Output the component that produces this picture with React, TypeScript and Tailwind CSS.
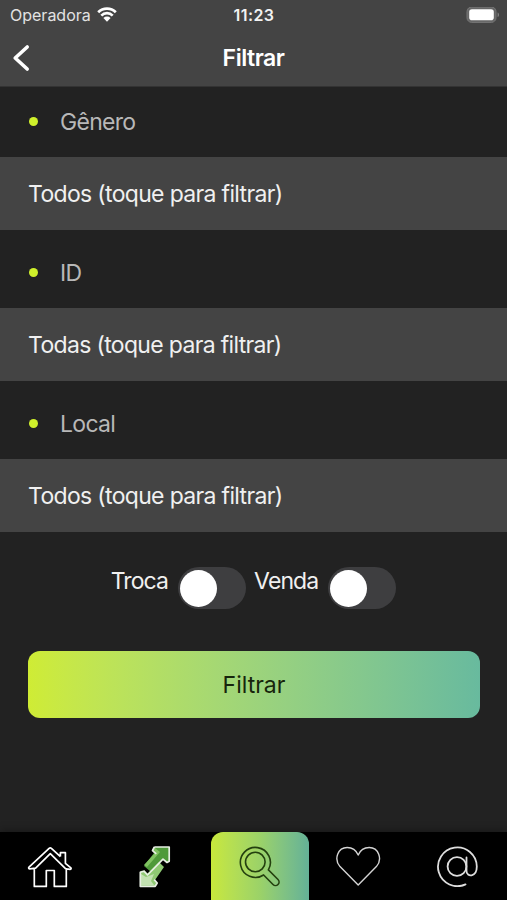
import React, { FC, ReactNode, useState } from 'react'

const filters = [
  { label: 'Gênero', value: 'Todos (toque para filtrar)', height: 'h-[70px] pb-px' },
  { label: 'ID', value: 'Todas (toque para filtrar)', height: 'h-[78px] pt-[7px]' },
  { label: 'Local', value: 'Todos (toque para filtrar)', height: 'h-[78px] pt-[7px]' }
]

const StatusBar: FC = () => (
  <div className="flex h-[30px] items-center justify-between pr-[7px] pl-[10px]">
    <div className="flex w-[200px] items-center gap-[6px]">
      <span className="text-[16px] leading-5 text-[#e2e2e2]">Operadora</span>
      <svg width="20" height="16" viewBox="0 0 20 16" fill="none">
        <path
          d="M1.2 5.2a12.4 12.4 0 0 1 17.6 0M4.3 8.6a8 8 0 0 1 11.4 0"
          stroke="#fff"
          strokeWidth="2.7"
        />
        <path d="M6.4 11a5.2 5.2 0 0 1 7.2 0L10 14.7z" fill="#fff" />
      </svg>
    </div>
    <span className="mr-[2px] text-[16px] leading-5 font-semibold tracking-[0.4px] text-[#f2f2f2]">
      11:23
    </span>
    <div className="flex w-[200px] justify-end">
      <svg width="34" height="17" viewBox="0 0 34 17">
        <rect
          x="1"
          y="0"
          width="29"
          height="15.4"
          rx="4.6"
          fill="#666"
          stroke="#777"
          strokeWidth="1"
        />
        <rect x="3.2" y="2.2" width="24.6" height="11" rx="2.8" fill="#fff" />
        <path d="M31.6 5.4c1.8.7 1.8 3.9 0 4.6z" fill="#858585" />
      </svg>
    </div>
  </div>
)

const Toggle: FC<{ label: string }> = ({ label }) => {
  const [on, setOn] = useState(false)

  return (
    <div className="flex items-start">
      <span className="mt-[-1px] text-[23px] leading-[30px] tracking-[-0.9px] text-[#f0f0f0]">
        {label}
      </span>
      <button
        type="button"
        role="switch"
        aria-checked={on}
        aria-label={label}
        onClick={() => setOn(!on)}
        className={`ml-[10px] flex h-[42px] w-[68px] items-center rounded-full bg-[#3e3e40] px-[2px] ${
          on ? 'justify-end' : 'justify-start'
        }`}>
        <span className="h-[37px] w-[37px] rounded-full bg-white" />
      </button>
    </div>
  )
}

const TabItem: FC<{ label: string; children: ReactNode }> = ({
  label,
  children
}) => (
  <button
    type="button"
    aria-label={label}
    className="flex h-full items-center justify-center">
    {children}
  </button>
)

const App: FC = () => {
  return (
    <div className="flex h-[900px] w-full flex-col overflow-hidden bg-[#222] font-['Inter','Liberation_Sans',sans-serif]">
      <header className="h-[87px] shrink-0 border-b border-[#333] bg-[#444]">
        <StatusBar />
        <div className="flex h-[56px] items-center justify-between px-3">
          <button type="button" aria-label="Voltar" className="w-10">
            <svg width="18" height="28" viewBox="0 0 18 28" fill="none">
              <path
                d="M15.2 3L3.2 14l12 11"
                stroke="#fff"
                strokeWidth="3.6"
                strokeLinecap="round"
                strokeLinejoin="round"
              />
            </svg>
          </button>
          <h1 className="text-[23px] leading-7 font-semibold tracking-[-0.5px] text-white">
            Filtrar
          </h1>
          <span className="w-10" />
        </div>
      </header>

      <main className="flex-1">
        {filters.map((item) => (
          <section key={item.label}>
            <div className={`flex items-center pl-[29px] ${item.height}`}>
              <span className="h-[9px] w-[9px] rounded-full bg-[#cff02b]" />
              <span className="ml-[22px] text-[23px] leading-7 tracking-[-0.7px] text-[#b8b8b8]">
                {item.label}
              </span>
            </div>
            <button
              type="button"
              className="flex h-[73px] w-full items-center bg-[#444] pt-px pl-[28px] text-left text-[23px] tracking-[-0.67px] whitespace-nowrap text-[#f0f0f0]">
              {item.value}
            </button>
          </section>
        ))}

        <div className="flex justify-center gap-2 pt-[35px]">
          <Toggle label="Troca" />
          <Toggle label="Venda" />
        </div>

        <div className="mt-[42px] pr-[27px] pl-7">
          <button
            type="button"
            className="h-[67px] w-full rounded-[12px] bg-linear-to-r from-[#cfec34] to-[#68ba9e] pt-0.5 text-[23px] text-[#17250c]">
            Filtrar
          </button>
        </div>
      </main>

      <nav className="grid h-[68px] shrink-0 grid-cols-[100px_110px_99px_99px_99px] bg-black shadow-[0_-2px_8px_rgba(0,0,0,0.3)]">
        <TabItem label="Início">
          <svg width="46" height="44" viewBox="0 0 46 44" fill="none">
            <path
              d="M7.3 24v18.4h12V26.5h8v15.9h12V24M33.4 12.6V8.7h5v10.6l5.5 4.6c.6.7-.1 1.6-1 1.5l-4.4-.7L23.3 9.7 8.6 24.1l-5.8.7c-1 .1-1.6-.8-.8-1.6L22.1 4.3c.7-.6 1.6-.6 2.3 0l9 8.3"
              stroke="#fff"
              strokeWidth="1.7"
              strokeLinejoin="round"
            />
          </svg>
        </TabItem>
        <TabItem label="Trocas">
          <svg width="34" height="44" viewBox="0 0 34 44">
            <path d="M16 3h15v14l-2 2-4-4-12 13-7-6 10-13-2-3z" fill="#4f9a3a" />
            <path d="M17 4l5 4L9 23l-3-2 11-12-3-3z" fill="#80c261" />
            <path
              d="M2.5 27l4-.5 3 3L21 18l5 5-9 13 2 3-2 3h-14z"
              fill="#8fc973"
            />
            <path d="M3 30l5 3 8-3-3 7 3 4H3z" fill="#c3e2b2" />
            <path
              d="M16.3 3h14.9v14.2l-2.2 1.3-4-3.3L9.5 31 6 27.2l-3.7 1v14.1h14.9l2-3.3-3-3.4M16.3 3l-1.8 3.6 3.8 3.2"
              fill="none"
              stroke="#e8efe4"
              strokeWidth="1.7"
              strokeLinejoin="round"
            />
          </svg>
        </TabItem>
        <button
          type="button"
          aria-label="Filtrar"
          className="ml-px flex h-full items-center justify-center rounded-t-[12px] bg-linear-to-r from-[#c8e83a] via-[#9bd268] via-50% to-[#64b197]">
          <svg width="44" height="44" viewBox="0 0 44 44" fill="none">
            <g stroke="#24400f" strokeWidth="1.6">
              <circle cx="17.3" cy="18" r="9.8" />
              <path d="M25.6 31a15 15 0 1 1 4.8-5.1L40 35.5a3.5 3.5 0 0 1-5 5z" />
            </g>
          </svg>
        </button>
        <TabItem label="Favoritos">
          <svg width="46" height="42" viewBox="0.8 0 46 42" fill="none">
            <path
              d="M23 40L4.8 21.6C-1.6 14.2 2.6 2.5 12 2.5c5 0 9 2.9 11 7.5 2-4.6 6-7.5 11-7.5 9.4 0 13.6 11.7 7.2 19.1z"
              stroke="#d4d4d4"
              strokeWidth="1.4"
              strokeLinejoin="round"
            />
          </svg>
        </TabItem>
        <TabItem label="Contato">
          <svg width="42" height="42" viewBox="0.5 0 42 42" fill="none">
            <g stroke="#dedede" strokeWidth="1.8" strokeLinecap="round">
              <circle cx="20.5" cy="21.5" r="9.4" />
              <path d="M30 12.4v13.6c0 6.5 10.3 6.5 10.3-4.5A19.4 19.4 0 1 0 29 39.4" />
            </g>
          </svg>
        </TabItem>
      </nav>
    </div>
  )
}

export default App
